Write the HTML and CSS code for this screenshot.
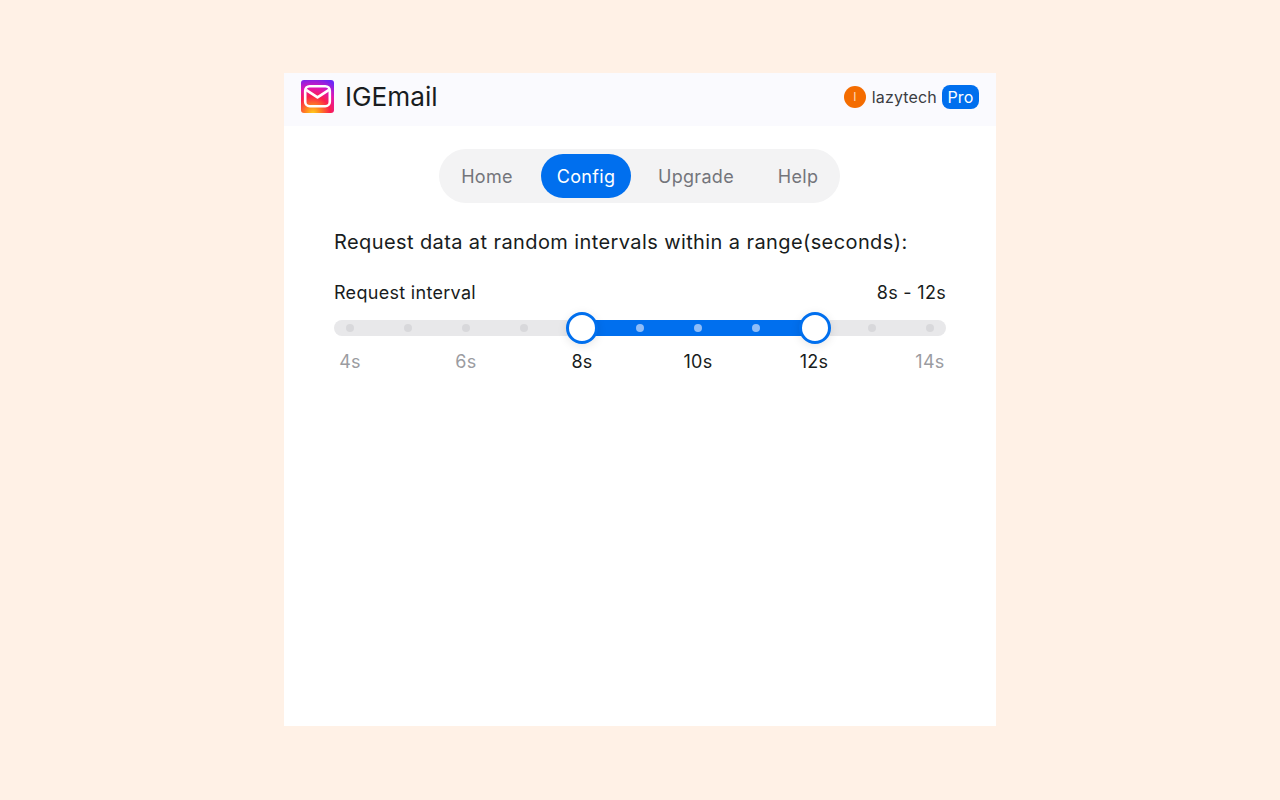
FILE: index.html
```html
<!DOCTYPE html>
<html lang="en">
  <head>
    <meta charset="UTF-8" />
    <meta name="viewport" content="width=device-width, initial-scale=1.0" />
    <title>IGEmail</title>
    <link rel="stylesheet" href="styles.css">
  </head>
  <body>
    <div class="card">
      <header class="header">
        <div class="brand">
          <svg class="logo" width="33" height="33" viewBox="0 0 33 33">
            <defs>
              <radialGradient id="logoGlow" cx="0.36" cy="1.02" r="1.1">
                <stop offset="0" stop-color="#ffd21e" />
                <stop offset="0.2" stop-color="#ff8a1e" />
                <stop offset="0.48" stop-color="#fb1f4c" />
                <stop offset="0.72" stop-color="#e016b4" />
                <stop offset="1" stop-color="#6c26f6" />
              </radialGradient>
            </defs>
            <rect width="33" height="33" rx="3" fill="url(#logoGlow)" />
            <rect x="4.2" y="6.2" width="24.6" height="20" rx="4.5" fill="none" stroke="#fff" stroke-width="2.6" />
            <path d="M5 9.8 L16.5 17.4 L28 9.8" fill="none" stroke="#fff" stroke-width="2.6" stroke-linejoin="round" />
          </svg>
          <span class="brand-name">IGEmail</span>
        </div>
        <div class="user">
          <span class="avatar">I</span>
          <span class="username">lazytech</span>
          <span class="badge">Pro</span>
        </div>
      </header>

      <nav class="tabs">
        <a class="tab tab-home">Home</a>
        <a class="tab tab-config active">Config</a>
        <a class="tab tab-upgrade">Upgrade</a>
        <a class="tab tab-help">Help</a>
      </nav>

      <main class="content">
        <p class="intro">Request data at random intervals within a range(seconds):</p>
        <div class="slider-head">
          <span>Request interval</span>
          <span>8s - 12s</span>
        </div>
        <div class="slider">
          <div class="dots">
            <i></i><i></i><i></i><i></i><i class="on"></i><i class="on"></i><i class="on"></i><i class="on"></i><i class="on"></i><i></i><i></i>
          </div>
          <div class="fill"></div>
          <span class="thumb thumb-start"></span>
          <span class="thumb thumb-end"></span>
        </div>
        <div class="marks">
          <span>4s</span>
          <span>6s</span>
          <span class="in-range">8s</span>
          <span class="in-range">10s</span>
          <span class="in-range">12s</span>
          <span>14s</span>
        </div>
      </main>
    </div>
  </body>
</html>
```

FILE: styles.css
```css
body {
  font-family: "Inter", "Liberation Sans", sans-serif;
  background-color: #fff1e6;
  color: #181c20;
  margin: 0;
  padding: 73px 0 0;
  height: 800px;
  box-sizing: border-box;
  overflow: hidden;
}

/* Main panel */
.card {
  width: 712px;
  height: 653px;
  margin: 0 auto;
  background: #ffffff;
}

/* Header */
.header {
  display: flex;
  justify-content: space-between;
  align-items: center;
  height: 53px;
  box-sizing: border-box;
  padding: 0 17px 6px;
  background: #fafafe;
}

.brand {
  display: flex;
  align-items: center;
  gap: 11px;
}

.logo {
  display: block;
}

.brand-name {
  font-size: 26.2px;
}

.user {
  display: flex;
  align-items: center;
  font-size: 16px;
  letter-spacing: 0.15px;
  color: #3a3d42;
}

.avatar {
  display: flex;
  align-items: center;
  justify-content: center;
  width: 22px;
  height: 22px;
  margin-right: 6px;
  border-radius: 50%;
  background: #f46c00;
  color: #ffd9b8;
  font-size: 12px;
}

.badge {
  margin-left: 5px;
  padding: 2px 5.5px;
  border-radius: 8px;
  background: #006fee;
  color: #ffffff;
  line-height: 20px;
}

/* Tabs */
.tabs {
  display: flex;
  align-items: center;
  width: 401px;
  height: 54px;
  box-sizing: border-box;
  margin: 23px 0 0 155px;
  padding: 0 5px 0 4px;
  border-radius: 27px;
  background: #f3f3f4;
  font-size: 18px;
  letter-spacing: 0.3px;
  color: #73757b;
}

.tab {
  display: flex;
  align-items: center;
  justify-content: center;
  height: 44px;
  border-radius: 22px;
}

.tab-home {
  width: 88px;
}

.tab-config {
  width: 90px;
  margin-left: 10px;
}

.tab-upgrade {
  width: 94px;
  margin-left: 18px;
}

.tab-help {
  width: 60px;
  margin-left: 25px;
}

.tab.active {
  background: #006fee;
  color: #ffffff;
}

/* Slider section */
.content {
  padding: 0 50px;
}

.intro {
  margin: 26px 0 0;
  font-size: 20px;
  line-height: 26px;
  letter-spacing: 0.4px;
}

.slider-head {
  display: flex;
  justify-content: space-between;
  margin-top: 26px;
  font-size: 18px;
  line-height: 24px;
  letter-spacing: 0.3px;
}

.slider {
  position: relative;
  height: 16px;
  margin-top: 15px;
  border-radius: 8px;
  background: #e8e8ea;
}

.dots {
  display: flex;
  justify-content: space-between;
  align-items: center;
  height: 16px;
  padding: 0 12px;
}

.dots i {
  position: relative;
  z-index: 1;
  width: 8px;
  height: 8px;
  border-radius: 50%;
  background: #d8d8db;
}

.dots i.on {
  background: #8fbdf8;
}

.fill {
  position: absolute;
  top: 0;
  left: 248px;
  width: 233px;
  height: 16px;
  background: #006fee;
}

.thumb {
  position: absolute;
  z-index: 2;
  top: -8px;
  width: 32px;
  height: 32px;
  box-sizing: border-box;
  border: 3px solid #006fee;
  border-radius: 50%;
  background: #ffffff;
  box-shadow: 0 2px 10px rgba(0, 0, 0, 0.1);
}

.thumb-start {
  left: 232px;
}

.thumb-end {
  left: 465px;
}

.marks {
  display: flex;
  justify-content: space-between;
  margin: 14px -4px 0;
  font-size: 18px;
  line-height: 24px;
  letter-spacing: 0.3px;
  color: #9b9ca1;
}

.marks span {
  width: 40px;
  text-align: center;
}

.marks .in-range {
  color: #181c20;
}
```
